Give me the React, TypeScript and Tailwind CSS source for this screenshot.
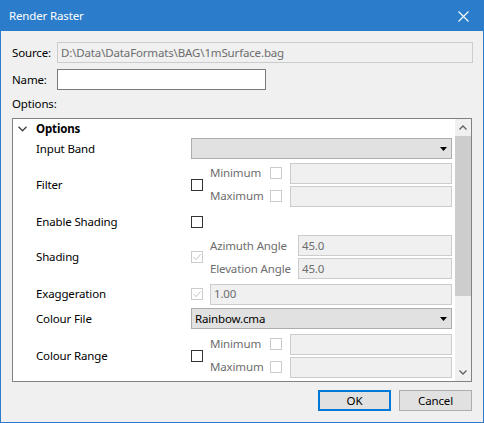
import React from "react";

const Arrow = () => (
  <svg width="7" height="4" viewBox="0 0 7 4" className="block">
    <path d="M0 0h7L3.5 4z" fill="#000" />
  </svg>
);

const Check = ({ disabled = false, checked = false }: { disabled?: boolean; checked?: boolean }) => (
  <div
    className={
      "w-[12px] h-[12px] shrink-0 border bg-white flex items-center justify-center " +
      (disabled ? "border-[#cccccc]" : "border-[#333333]")
    }
  >
    {checked && (
      <svg width="10" height="10" viewBox="0 0 10 10" className="block">
        <path d="M1.5 5.2 L4 7.6 L8.6 2.4" stroke="#c4c4c4" strokeWidth="1" fill="none" />
      </svg>
    )}
  </div>
);

const DisInput = ({ value = "", w }: { value?: string; w: string }) => (
  <div className={"h-[21px] border border-[#cccccc] bg-[#f0f0f0] flex items-center pl-[3px] text-[#6d6d6d] " + w}>
    {value}
  </div>
);

const Combo = ({ value = "" }: { value?: string }) => (
  <div className="h-[21px] w-[261px] border border-[#adadad] bg-[#e1e1e1] flex items-center justify-between pl-[3px] pr-[4px] text-black">
    <span>{value}</span>
    <Arrow />
  </div>
);

const Row = ({ label, h, children }: { label: string; h: string; children: React.ReactNode }) => (
  <div className={"flex items-center pl-[23px] " + h}>
    <div className="w-[155px] shrink-0 text-black">{label}</div>
    <div className="w-[261px] shrink-0">{children}</div>
  </div>
);

const MinMax = () => (
  <div className="flex items-center">
    <Check />
    <div className="ml-[7px] flex flex-col gap-[2px]">
      {["Minimum", "Maximum"].map((t) => (
        <div key={t} className="flex items-center h-[21px]">
          <div className="w-[60px] text-[#6d6d6d]">{t}</div>
          <Check disabled />
          <div className="ml-[8px]">
            <DisInput w="w-[162px]" />
          </div>
        </div>
      ))}
    </div>
  </div>
);

export default function App() {
  return (
    <div
      className="w-[484px] h-[423px] border border-[#2b7dcb] bg-[#f0f0f0] flex flex-col text-[11.5px] tracking-[-0.15px] leading-none overflow-hidden"
      style={{ fontFamily: '"Noto Sans", "Segoe UI", sans-serif' }}
    >
      <div className="h-[30px] bg-[#2b7dcb] flex items-center justify-between pl-[8px] pr-[5px] text-white shrink-0">
        <span>Render Raster</span>
        <div className="w-[30px] h-[30px] flex items-center justify-center">
          <svg width="11" height="11" viewBox="0 0 11 11" className="block">
            <path d="M0.5 0.5 L10.5 10.5 M10.5 0.5 L0.5 10.5" stroke="#fff" strokeWidth="1.1" />
          </svg>
        </div>
      </div>

      <div className="flex flex-col pl-[11px] pt-[11px]">
        <div className="flex items-center h-[21px]">
          <div className="w-[45px] text-black">Source:</div>
          <div className="w-[416px] h-[21px] border border-[#cccccc] bg-[#f0f0f0] flex items-center pl-[3px] text-[#6d6d6d]">
            D:\Data\DataFormats\BAG\1mSurface.bag
          </div>
        </div>
        <div className="flex items-center h-[21px] mt-[6px]">
          <div className="w-[45px] text-black">Name:</div>
          <div className="w-[209px] h-[21px] border border-[#7a7a7a] bg-white" />
        </div>
        <div className="h-[28px] flex items-center text-black">Options:</div>

        <div className="w-[460px] h-[264px] border border-[#828282] bg-white flex overflow-hidden">
          <div className="flex-1 flex flex-col overflow-hidden">
            <div className="h-[19px] flex items-center">
              <svg width="9" height="6" viewBox="0 0 9 6" className="block ml-[5px]">
                <path d="M0.5 0.8 L4.5 4.8 L8.5 0.8" stroke="#404040" strokeWidth="1.3" fill="none" />
              </svg>
              <span className="ml-[9px] font-bold text-black">Options</span>
            </div>
            <Row label="Input Band" h="h-[21px]">
              <Combo />
            </Row>
            <Row label="Filter" h="h-[51px]">
              <MinMax />
            </Row>
            <Row label="Enable Shading" h="h-[23px]">
              <Check />
            </Row>
            <Row label="Shading" h="h-[48px]">
              <div className="flex items-center">
                <Check disabled checked />
                <div className="ml-[7px] flex flex-col gap-[2px]">
                  <div className="flex items-center h-[21px]">
                    <div className="w-[88px] text-[#6d6d6d]">Azimuth Angle</div>
                    <DisInput value="45.0" w="w-[154px]" />
                  </div>
                  <div className="flex items-center h-[21px]">
                    <div className="w-[88px] text-[#6d6d6d]">Elevation Angle</div>
                    <DisInput value="45.0" w="w-[154px]" />
                  </div>
                </div>
              </div>
            </Row>
            <Row label="Exaggeration" h="h-[26px]">
              <div className="flex items-center">
                <Check disabled checked />
                <div className="ml-[7px]">
                  <DisInput value="1.00" w="w-[242px]" />
                </div>
              </div>
            </Row>
            <Row label="Colour File" h="h-[23px]">
              <Combo value="Rainbow.cma" />
            </Row>
            <Row label="Colour Range" h="h-[51px]">
              <MinMax />
            </Row>
          </div>
          <div className="w-[16px] shrink-0 bg-[#f0f0f0] flex flex-col">
            <div className="h-[17px] flex items-center justify-center">
              <svg width="8" height="5" viewBox="0 0 8 5" className="block">
                <path d="M0.5 4.5 L4 1 L7.5 4.5" stroke="#606060" strokeWidth="1.3" fill="none" />
              </svg>
            </div>
            <div className="h-[160px] bg-[#cdcdcd]" />
            <div className="flex-1" />
            <div className="h-[17px] flex items-center justify-center">
              <svg width="8" height="5" viewBox="0 0 8 5" className="block">
                <path d="M0.5 0.5 L4 4 L7.5 0.5" stroke="#606060" strokeWidth="1.3" fill="none" />
              </svg>
            </div>
          </div>
        </div>

        <div className="flex justify-end gap-[8px] w-[460px] mt-[8px]">
          <div className="w-[73px] h-[21px] border-2 border-[#0078d7] bg-[#e1e1e1] flex items-center justify-center text-black">
            OK
          </div>
          <div className="w-[73px] h-[21px] border border-[#adadad] bg-[#e1e1e1] flex items-center justify-center text-black">
            Cancel
          </div>
        </div>
      </div>
    </div>
  );
}
